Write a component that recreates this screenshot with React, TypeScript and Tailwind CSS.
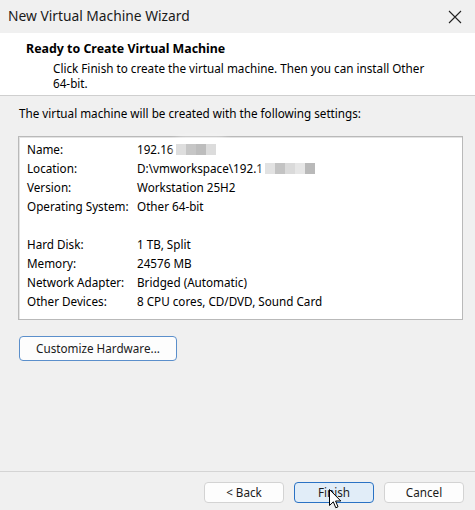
import React from "react";

type Row = { label: string; value: React.ReactNode };

function Blur({ shades }: { shades: string[] }) {
  return (
    <span className="relative inline-flex items-center h-[12px] ml-[2px] align-middle">
      <span className="absolute -left-[4px] -right-[14px] -top-[6px] -bottom-[4px] rounded-full bg-white/80 blur-[3px]" />
      {shades.map((c, i) => (
        <span key={i} className="relative h-[11px] w-[10px] blur-[0.5px]" style={{ backgroundColor: c }} />
      ))}
    </span>
  );
}

const rows: Row[] = [
  { label: "Name:", value: <>192.16<Blur shades={["#dedede", "#c6c6c6", "#bdbdbd", "#dcdcdc"]} /></> },
  { label: "Location:", value: <>D:\vmworkspace\192.1<Blur shades={["#e2e2e2", "#c3c3c3", "#dadada", "#e6e6e6", "#b9b9b9"]} /></> },
  { label: "Version:", value: "Workstation 25H2" },
  { label: "Operating System:", value: "Other 64-bit" },
  { label: "", value: "" },
  { label: "Hard Disk:", value: "1 TB, Split" },
  { label: "Memory:", value: "24576 MB" },
  { label: "Network Adapter:", value: "Bridged (Automatic)" },
  { label: "Other Devices:", value: "8 CPU cores, CD/DVD, Sound Card" },
];

function Button({ children, primary }: { children: React.ReactNode; primary?: boolean }) {
  return (
    <button
      className={
        "h-[21px] w-[80px] rounded-[4px] border text-[11.7px] text-[#1b1b1b] " +
        (primary ? "border-[#2a72c4] bg-[#e1edf8]" : "border-[#d3d3d3] bg-[#fdfdfd]")
      }
    >
      {children}
    </button>
  );
}

export default function App() {
  return (
    <div className="relative w-[475px] h-[510px] bg-[#f0f0f0] flex flex-col overflow-hidden font-['Noto_Sans','Open_Sans',sans-serif] text-black">
      {/* title bar */}
      <div className="h-[33px] flex items-center justify-between pl-[8px] pr-[13px]">
        <span className="text-[13.8px] text-[#1a1a1a]">New Virtual Machine Wizard</span>
        <svg width="14" height="14" viewBox="0 0 14 14" className="mt-[1px]">
          <path d="M1 1 L13 13 M13 1 L1 13" stroke="#222" strokeWidth="1.1" />
        </svg>
      </div>

      {/* header */}
      <div className="h-[63px] bg-white border-b border-[#cfcfcf] pt-[8px] pl-[26px] text-[11.7px] leading-[15px]">
        <div className="font-bold text-[12.4px]">Ready to Create Virtual Machine</div>
        <div className="pl-[27px] pt-[5px] pr-[40px]">
          Click Finish to create the virtual machine. Then you can install Other 64-bit.
        </div>
      </div>

      {/* body */}
      <div className="flex-1 flex flex-col pl-[18px] pr-[12px] text-[11.7px]">
        <div className="mt-[9px] pl-[1px] leading-[16px]">The virtual machine will be created with the following settings:</div>

        <div className="mt-[15px] h-[184px] bg-white border border-[#b9b9b9] shadow-[inset_1px_1px_0_#e3e3e3] pt-[3px] pl-[8px]">
          {rows.map((r, i) => (
            <div key={i} className="h-[19px] flex items-center leading-[19px]">
              <span className="w-[110px] shrink-0">{r.label}</span>
              <span className="flex items-center">{r.value}</span>
            </div>
          ))}
        </div>

        <div className="mt-[16px]">
          <button className="h-[25px] w-[158px] ml-[1px] rounded-[4px] border border-[#5b8fcb] bg-[#fdfdfd] text-[11.7px] text-[#1b1b1b]">
            Customize Hardware...
          </button>
        </div>
      </div>

      {/* footer */}
      <div className="h-[39px] border-t border-[#d4d4d4] flex justify-end gap-[10px] pt-[10px] pr-[11px]">
        <Button>&lt; Back</Button>
        <Button primary>Finish</Button>
        <Button>Cancel</Button>
      </div>

      {/* mouse pointer */}
      <svg width="13" height="21" viewBox="0 0 13 21" className="absolute left-[329px] top-[489px]">
        <path d="M0.5 0.5 L0.5 16.5 L4.3 12.8 L6.8 18.8 L9 17.8 L6.6 12 L11.8 12 Z" fill="white" stroke="black" strokeWidth="1" strokeLinejoin="round" />
      </svg>
    </div>
  );
}
